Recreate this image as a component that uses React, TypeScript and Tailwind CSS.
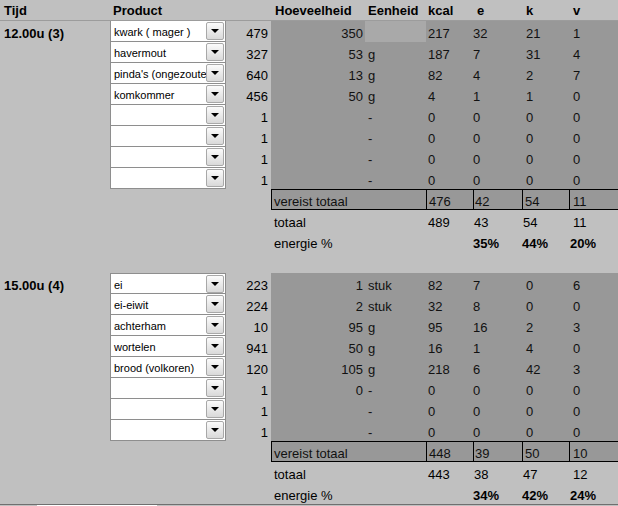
import React from "react";

type Row = {
  product: string;
  id: string;
  qty: string;
  unit: string;
  kcal: string;
  e: string;
  k: string;
  v: string;
  hl?: boolean;
};

type Block = {
  label: string;
  rows: Row[];
  required: string[];
  total: string[];
  energy: string[];
};

// text cells sit a little low in the sheet rows
const cell = "flex items-center pt-[3px]";

const empty = (qty = ""): Row => ({ product: "", id: "1", qty, unit: "-", kcal: "0", e: "0", k: "0", v: "0" });

const blocks: Block[] = [
  {
    label: "12.00u (3)",
    rows: [
      { product: "kwark ( mager )", id: "479", qty: "350", unit: "", kcal: "217", e: "32", k: "21", v: "1", hl: true },
      { product: "havermout", id: "327", qty: "53", unit: "g", kcal: "187", e: "7", k: "31", v: "4" },
      { product: "pinda's (ongezouten)", id: "640", qty: "13", unit: "g", kcal: "82", e: "4", k: "2", v: "7" },
      { product: "komkommer", id: "456", qty: "50", unit: "g", kcal: "4", e: "1", k: "1", v: "0" },
      empty(),
      empty(),
      empty(),
      empty(),
    ],
    required: ["476", "42", "54", "11"],
    total: ["489", "43", "54", "11"],
    energy: ["35%", "44%", "20%"],
  },
  {
    label: "15.00u (4)",
    rows: [
      { product: "ei", id: "223", qty: "1", unit: "stuk", kcal: "82", e: "7", k: "0", v: "6" },
      { product: "ei-eiwit", id: "224", qty: "2", unit: "stuk", kcal: "32", e: "8", k: "0", v: "0" },
      { product: "achterham", id: "10", qty: "95", unit: "g", kcal: "95", e: "16", k: "2", v: "3" },
      { product: "wortelen", id: "941", qty: "50", unit: "g", kcal: "16", e: "1", k: "4", v: "0" },
      { product: "brood (volkoren)", id: "120", qty: "105", unit: "g", kcal: "218", e: "6", k: "42", v: "3" },
      empty("0"),
      empty(),
      empty(),
    ],
    required: ["448", "39", "50", "10"],
    total: ["443", "38", "47", "12"],
    energy: ["34%", "42%", "24%"],
  },
];

const Dropdown = ({ value, first }: { value: string; first: boolean }) => (
  <div className={`flex h-[21px] bg-white border-x border-b border-[#8e8e8e] ${first ? "border-t" : ""}`}>
    <div className="flex-1 min-w-0 overflow-hidden whitespace-nowrap pl-[3px] pt-[2px] text-[11px] leading-[18px] text-black">
      {value}
    </div>
    <div className="my-auto mr-px flex h-[18px] w-[18px] items-center justify-center rounded-[2px] border border-[#a8a8a8] bg-linear-to-b from-[#fbfbfb] to-[#d9d9d9]">
      <div className="h-0 w-0 border-x-[4px] border-t-[4px] border-x-transparent border-t-black" />
    </div>
  </div>
);

const DataRow = ({ label, row, first }: { label: string; row: Row; first: boolean }) => (
  <div className="flex h-[21px]">
    <div className={`${cell} w-[110px] pl-[4px] font-bold`}>{label}</div>
    <div className="w-[116px]">
      <Dropdown value={row.product} first={first} />
    </div>
    <div className={`${cell} w-[45px] justify-end pr-[3px]`}>{row.id}</div>
    <div className="flex flex-1 bg-[#989898] text-[#111]">
      <div className={`${cell} w-[94px] justify-end pr-[2px]`}>{row.qty}</div>
      <div className={`${cell} w-[61px] pl-[3px] ${row.hl ? "bg-[#a9a9a9]" : ""}`}>{row.unit}</div>
      <div className={`${cell} w-[47px] pl-[2px]`}>{row.kcal}</div>
      <div className={`${cell} w-[49px]`}>{row.e}</div>
      <div className={`${cell} w-[47px] pl-[4px]`}>{row.k}</div>
      <div className={`${cell} flex-1 pl-[4px]`}>{row.v}</div>
    </div>
  </div>
);

const MealBlock = ({ block, isFirst }: { block: Block; isFirst: boolean }) => (
  <div className="flex flex-col">
    {block.rows.map((r, i) => (
      <DataRow key={i} label={i === 0 ? block.label : ""} row={r} first={i === 0 && !isFirst} />
    ))}

    <div className="flex h-[21px]">
      <div className="w-[271px]" />
      <div className="flex flex-1 border-y border-l border-black bg-[#989898] text-[#111]">
        <div className={`${cell} w-[155px] border-r border-black pl-[2px]`}>vereist totaal</div>
        <div className={`${cell} w-[47px] border-r border-black pl-[2px]`}>{block.required[0]}</div>
        <div className={`${cell} w-[49px] border-r border-black pl-[1px]`}>{block.required[1]}</div>
        <div className={`${cell} w-[47px] border-r border-black pl-[2px]`}>{block.required[2]}</div>
        <div className={`${cell} flex-1 pl-[3px]`}>{block.required[3]}</div>
      </div>
    </div>

    <div className="flex h-[21px]">
      <div className="w-[271px]" />
      <div className={`${cell} w-[155px] pl-[3px]`}>totaal</div>
      <div className={`${cell} w-[47px] pl-[2px]`}>{block.total[0]}</div>
      <div className={`${cell} w-[49px] pl-[1px]`}>{block.total[1]}</div>
      <div className={`${cell} w-[47px] pl-[1px]`}>{block.total[2]}</div>
      <div className={`${cell} flex-1 pl-[4px]`}>{block.total[3]}</div>
    </div>

    <div className="flex h-[21px]">
      <div className="w-[271px]" />
      <div className={`${cell} w-[202px] pl-[3px]`}>energie %</div>
      <div className={`${cell} w-[49px] font-bold`}>{block.energy[0]}</div>
      <div className={`${cell} w-[47px] font-bold`}>{block.energy[1]}</div>
      <div className={`${cell} flex-1 pl-[1px] font-bold`}>{block.energy[2]}</div>
    </div>
  </div>
);

export default function App() {
  return (
    <div className="h-[506px] w-[618px] overflow-hidden bg-[#c0c0c0] font-['Liberation_Sans',Arial,sans-serif] text-[13px] leading-none text-black">
      <div className="flex h-[21px] items-center border-b border-[#9c9c9c] font-bold">
        <div className="w-[110px] pl-[4px]">Tijd</div>
        <div className="w-[161px] pl-[3px]">Product</div>
        <div className="w-[94px] pl-[4px]">Hoeveelheid</div>
        <div className="w-[61px] pl-[3px]">Eenheid</div>
        <div className="w-[47px] pl-[2px]">kcal</div>
        <div className="w-[49px] pl-[4px]">e</div>
        <div className="w-[47px] pl-[4px]">k</div>
        <div className="flex-1 pl-[4px]">v</div>
      </div>

      <MealBlock block={blocks[0]} isFirst={true} />
      <div className="h-[21px]" />
      <MealBlock block={blocks[1]} isFirst={false} />

      <div className="h-[2px] border-t border-[#6f6f6f]">
        <div className="ml-[37px] h-full w-[120px] bg-white" />
      </div>
    </div>
  );
}
